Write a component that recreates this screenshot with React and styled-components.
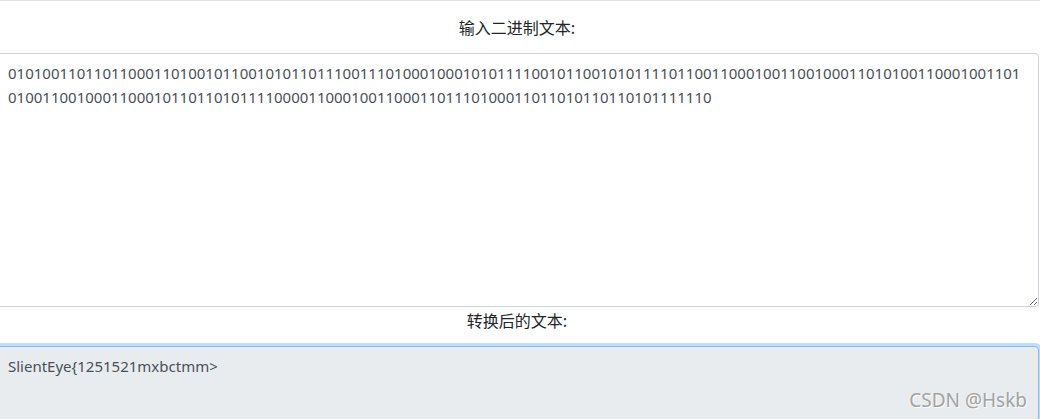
import styled, { createGlobalStyle } from "styled-components";

const GlobalStyle = createGlobalStyle`
    html, body {
      margin: 0;
      padding: 0;
      background: #fff;
      overflow: hidden;
    }
    body {
      font-family: "Noto Sans", "Noto Sans CJK SC", sans-serif;
      color: #212529;
    }
`;

const Page = styled.div`
    position: relative;
    width: 1040px;
    height: 419px;
    border-top: 1px solid #dee2e6;
    box-sizing: border-box;
    overflow: hidden;
`;

const Form = styled.div`
    margin: 0 1px 0 -5px;
    display: flex;
    flex-direction: column;
`;

const Label = styled.label`
    display: block;
    text-align: center;
    font-family: "Noto Sans CJK SC", "Noto Sans", sans-serif;
    font-size: 16px;
    line-height: 24px;
    color: #212529;
    padding-top: ${(p) => p.$top}px;
    margin-bottom: ${(p) => p.$bottom}px;
`;

const TextArea = styled.textarea`
    display: block;
    box-sizing: border-box;
    width: 100%;
    height: ${(p) => p.$height}px;
    margin: 0;
    padding: 7px 12px;
    font-family: "Noto Sans", sans-serif;
    font-size: 15px;
    line-height: 24px;
    color: #495057;
    background: ${(p) => (p.$readonly ? "#e9ecef" : "#fff")};
    border: 1px solid ${(p) => (p.$readonly ? "#80bdff" : "#ced4da")};
    border-radius: 4px;
    box-shadow: ${(p) => (p.$readonly ? "0 0 0 3px rgba(0, 123, 255, 0.25)" : "none")};
    outline: none;
    resize: ${(p) => (p.$readonly ? "none" : "vertical")};
    overflow: hidden;
    word-break: break-all;
`;

const Watermark = styled.span`
    position: absolute;
    right: 13px;
    bottom: 7px;
    font-family: "Noto Sans", sans-serif;
    font-size: 19px;
    line-height: 24px;
    color: #a3a3a3;
    text-shadow: 1px 1px 0 rgba(255, 255, 255, 0.8);
    pointer-events: none;
`;

const binary =
  "0101001101101100011010010110010101101110011101000100010101111001011001010111101100110001001100100011010100110001001101\n" +
  "0100110010001100010110110101111000011000100110001101110100011011010110110101111110";

export default function App() {
  return (
    <>
      <GlobalStyle />
      <Page>
        <Form>
          <Label $top={14} $bottom={14}>输入二进制文本:</Label>
          <TextArea $height={254} defaultValue={binary} spellCheck={false} />
          <Label $top={1} $bottom={14}>转换后的文本:</Label>
          <TextArea $height={110} $readonly readOnly defaultValue="SlientEye{1251521mxbctmm>" />
        </Form>
        <Watermark>CSDN @Hskb</Watermark>
      </Page>
    </>
  );
}
